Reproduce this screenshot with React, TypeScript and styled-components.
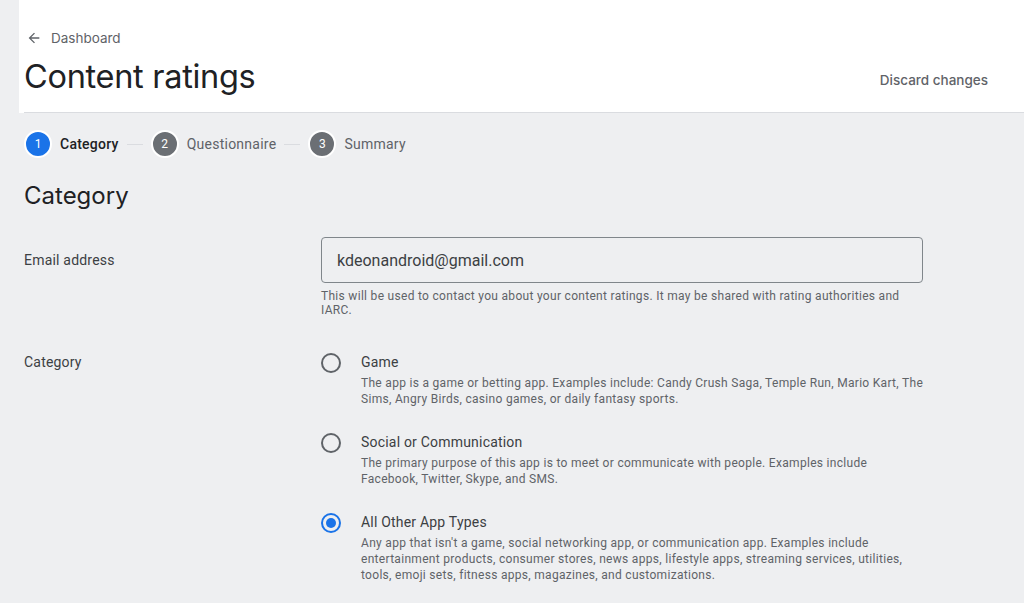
import React, { useState } from 'react';
import styled, { createGlobalStyle } from 'styled-components';

const GlobalStyle = createGlobalStyle`
  html, body { margin: 0; padding: 0; background: #eeeff1; }
  body { font-family: Roboto, "Liberation Sans", sans-serif; color: #202124; }
  * { box-sizing: border-box; }
`;

const HEAD_FONT = `Inter, "Open Sans", Roboto, sans-serif`;

const Page = styled.div`
  display: flex;
  min-height: 603px;
  padding-left: 19px;
  background: #eeeff1;
`;

const Main = styled.main`
  flex: 1;
  display: flex;
  flex-direction: column;
`;

const Header = styled.header`
  background: #fff;
  padding-left: 5px;
`;

const HeaderInner = styled.div`
  display: flex;
  align-items: flex-end;
  justify-content: space-between;
  height: 113px;
  padding: 31px 36px 15px 0;
  border-bottom: 1px solid #dadce0;
`;

const TitleCol = styled.div`
  display: flex;
  flex-direction: column;
`;

const Crumb = styled.a`
  display: flex;
  align-items: center;
  gap: 9px;
  padding-left: 2px;
  font-family: ${HEAD_FONT};
  font-size: 13.5px;
  color: #5f6368;
  text-decoration: none;
  line-height: 22px;
`;

const Title = styled.h1`
  margin: 8px 0 0;
  font-family: ${HEAD_FONT};
  font-weight: 400;
  font-size: 32.5px;
  line-height: 40px;
  color: #202124;
  letter-spacing: -0.3px;
`;

const Discard = styled.button`
  background: none;
  border: none;
  padding: 0;
  margin-bottom: 7px;
  font-family: ${HEAD_FONT};
  font-size: 13.5px;
  font-weight: 500;
  color: #5f6368;
  cursor: pointer;
  line-height: 20px;
`;

const Body = styled.div`
  padding: 17px 0 0 5px;
`;

const Stepper = styled.div`
  display: flex;
  align-items: center;
  height: 28px;
`;

const Step = styled.div`
  display: flex;
  align-items: center;
  gap: 8px;
`;

const StepNum = styled.span<{ $active: boolean }>`
  width: 28px;
  height: 28px;
  border-radius: 50%;
  border: 2px solid #fff;
  background: ${({ $active }) => ($active ? '#1a73e8' : '#6b6f74')};
  color: #fff;
  font-size: 12px;
  display: flex;
  align-items: center;
  justify-content: center;
`;

const StepLabel = styled.span<{ $active: boolean }>`
  font-size: 14px;
  letter-spacing: 0.25px;
  font-weight: ${({ $active }) => ($active ? 500 : 400)};
  color: ${({ $active }) => ($active ? '#202124' : '#5f6368')};
`;

const StepLine = styled.span`
  width: 16px;
  height: 1px;
  background: #dadce0;
  margin: 0 8px;
`;

const SectionTitle = styled.h2`
  margin: 22px 0 0;
  font-family: ${HEAD_FONT};
  font-weight: 400;
  font-size: 24px;
  line-height: 32px;
  color: #202124;
`;

const Row = styled.div<{ $top: number }>`
  display: grid;
  grid-template-columns: 297px 620px;
  margin-top: ${({ $top }) => $top}px;
`;

const Label = styled.div<{ $pad: number }>`
  font-size: 14px;
  letter-spacing: 0.2px;
  color: #3c4043;
  padding-top: ${({ $pad }) => $pad}px;
  line-height: 20px;
`;

const Input = styled.input`
  width: 602px;
  height: 46px;
  border: 1px solid #80868b;
  border-radius: 4px;
  background: transparent;
  padding: 0 15px;
  font-family: Roboto, sans-serif;
  font-size: 16px;
  color: #3c4043;
  outline: none;
`;

const Help = styled.div`
  margin-top: 6px;
  width: 602px;
  font-size: 12px;
  line-height: 14px;
  letter-spacing: 0.3px;
  color: #5f6368;
  padding-right: 10px;
`;

const Options = styled.div`
  display: flex;
  flex-direction: column;
  gap: 16px;
`;

const Option = styled.label`
  display: flex;
  gap: 20px;
  cursor: pointer;
  min-height: 64px;
`;

const Radio = styled.span<{ $checked: boolean }>`
  flex: none;
  width: 20px;
  height: 20px;
  margin-top: 1px;
  border-radius: 50%;
  border: 2px solid ${({ $checked }) => ($checked ? '#1a73e8' : '#5f6368')};
  display: flex;
  align-items: center;
  justify-content: center;
  &::after {
    content: '';
    width: 10px;
    height: 10px;
    border-radius: 50%;
    background: #1a73e8;
    display: ${({ $checked }) => ($checked ? 'block' : 'none')};
  }
`;

const OptText = styled.div`
  display: flex;
  flex-direction: column;
`;

const OptTitle = styled.span`
  font-size: 14px;
  line-height: 20px;
  letter-spacing: 0.2px;
  color: #3c4043;
`;

const OptDesc = styled.span`
  margin-top: 3px;
  font-size: 12px;
  line-height: 16px;
  letter-spacing: 0.3px;
  color: #5f6368;
  width: 563.5px;
`;

const CATEGORIES = [
  {
    id: 'game',
    title: 'Game',
    desc: 'The app is a game or betting app. Examples include: Candy Crush Saga, Temple Run, Mario Kart, The Sims, Angry Birds, casino games, or daily fantasy sports.',
  },
  {
    id: 'social',
    title: 'Social or Communication',
    desc: 'The primary purpose of this app is to meet or communicate with people. Examples include Facebook, Twitter, Skype, and SMS.',
  },
  {
    id: 'other',
    title: 'All Other App Types',
    desc: "Any app that isn't a game, social networking app, or communication app. Examples include entertainment products, consumer stores, news apps, lifestyle apps, streaming services, utilities, tools, emoji sets, fitness apps, magazines, and customizations.",
  },
];

const STEPS = ['Category', 'Questionnaire', 'Summary'];

const BackArrow = () => (
  <svg width="16" height="16" viewBox="0 0 24 24" fill="#5f6368">
    <path d="M20 11H7.83l5.59-5.59L12 4l-8 8 8 8 1.41-1.41L7.83 13H20v-2z" />
  </svg>
);

const App: React.FC = () => {
  const [category, setCategory] = useState('other');
  const [email, setEmail] = useState('kdeonandroid@gmail.com');

  return (
    <>
      <GlobalStyle />
      <Page>
        <Main>
          <Header>
            <HeaderInner>
              <TitleCol>
                <Crumb href="#">
                  <BackArrow />
                  Dashboard
                </Crumb>
                <Title>Content ratings</Title>
              </TitleCol>
              <Discard>Discard changes</Discard>
            </HeaderInner>
          </Header>

          <Body>
            <Stepper>
              {STEPS.map((s, i) => (
                <React.Fragment key={s}>
                  {i > 0 && <StepLine />}
                  <Step>
                    <StepNum $active={i === 0}>{i + 1}</StepNum>
                    <StepLabel $active={i === 0}>{s}</StepLabel>
                  </Step>
                </React.Fragment>
              ))}
            </Stepper>

            <SectionTitle>Category</SectionTitle>

            <Row $top={25}>
              <Label $pad={13}>Email address</Label>
              <div>
                <Input value={email} onChange={e => setEmail(e.target.value)} />
                <Help>
                  This will be used to contact you about your content ratings. It may be shared with rating
                  authorities and IARC.
                </Help>
              </div>
            </Row>

            <Row $top={35}>
              <Label $pad={0}>Category</Label>
              <Options>
                {CATEGORIES.map(c => (
                  <Option key={c.id} onClick={() => setCategory(c.id)}>
                    <Radio $checked={category === c.id} />
                    <OptText>
                      <OptTitle>{c.title}</OptTitle>
                      <OptDesc>{c.desc}</OptDesc>
                    </OptText>
                  </Option>
                ))}
              </Options>
            </Row>
          </Body>
        </Main>
      </Page>
    </>
  );
};

export default App;
